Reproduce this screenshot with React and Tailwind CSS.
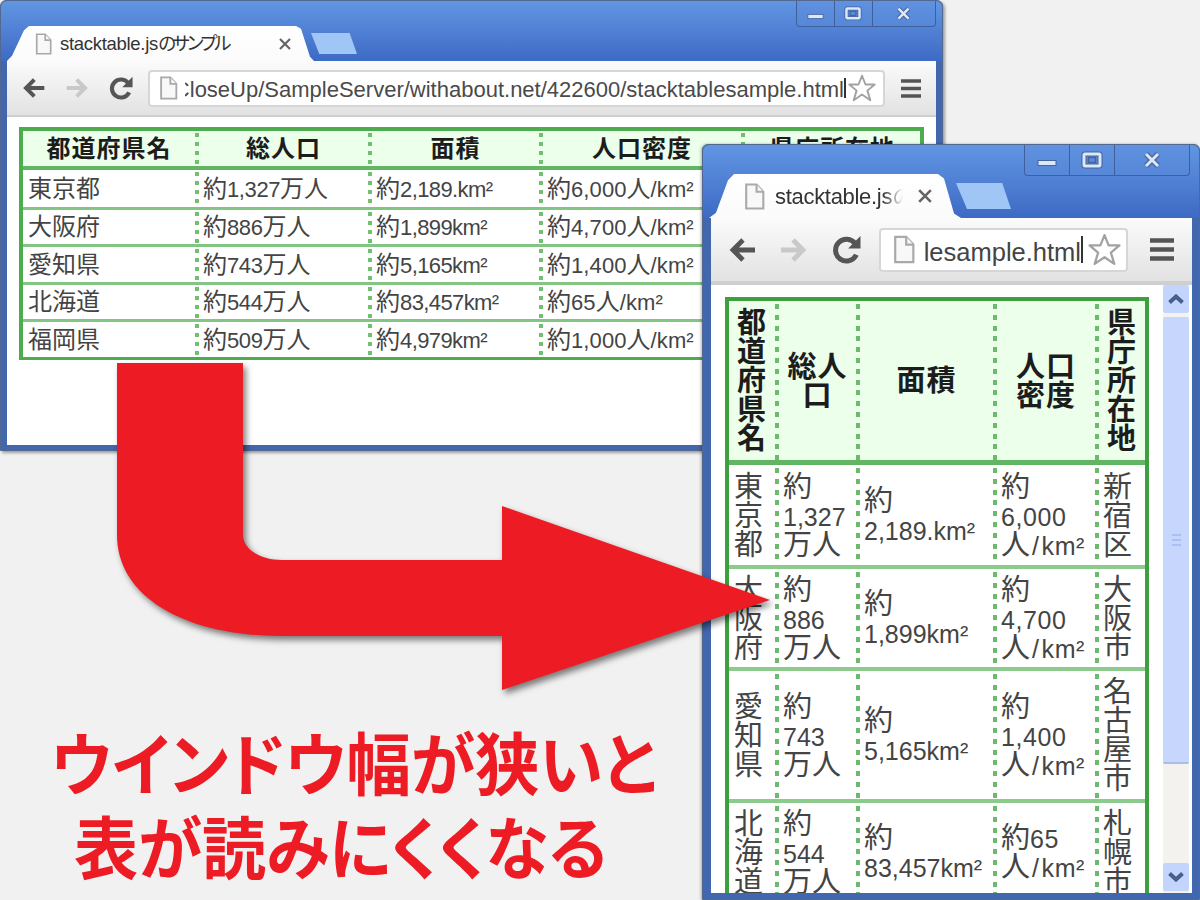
import clsx from 'clsx';

const prefectures = [
  ['東京都', '約1,327万人', '約2,189.km²', '約6,000人/km²', '新宿区'],
  ['大阪府', '約886万人', '約1,899km²', '約4,700人/km²', '大阪市'],
  ['愛知県', '約743万人', '約5,165km²', '約1,400人/km²', '名古屋市'],
  ['北海道', '約544万人', '約83,457km²', '約65人/km²', '札幌市'],
  ['福岡県', '約509万人', '約4,979km²', '約1,000人/km²', '福岡市'],
];

const wideHead = ['都道府県名', '総人口', '面積', '人口密度', '県庁所在地'];
const wideCols = ['w-[172px]', 'w-[173px]', 'w-[171px]', 'w-[202px]', 'w-[179px]'];
const wideHeights = ['h-[40px]', 'h-[37px]', 'h-[38px]', 'h-[37px]', 'h-[35px]'];
const wideLatin = ['', 'tracking-[-0.4px]', 'tracking-[-0.6px]', 'tracking-[0.1px]', ''];

// Cells as they wrap in the narrow window
const narrowHead = ['都\n道\n府\n県\n名', '総人\n口', '面積', '人口\n密度', '県\n庁\n所\n在\n地'];
const narrowCols = ['w-[46px]', 'w-[81px]', 'w-[137px]', 'w-[102px]', 'w-[50px]'];
const narrowRows = [
  { height: 'h-[104px]', cells: ['東\n京\n都', '約\n1,327\n万人', '約\n2,189.km²', '約\n6,000\n人/km²', '新\n宿\n区'] },
  { height: 'h-[102px]', cells: ['大\n阪\n府', '約\n886\n万人', '約\n1,899km²', '約\n4,700\n人/km²', '大\n阪\n市'] },
  { height: 'h-[132px]', cells: ['愛\n知\n県', '約\n743\n万人', '約\n5,165km²', '約\n1,400\n人/km²', '名\n古\n屋\n市'] },
  { height: 'h-[102px]', cells: ['北\n海\n道', '約\n544\n万人', '約\n83,457km²', '約65\n人/km²', '札\n幌\n市'] },
];
const narrowLatin = ['', '', '', 'tracking-[0.6px]', ''];

// Latin runs are set a little smaller than the kanji around them
function Mixed({ text, latin, slash }) {
  return text.split(/(\/|[0-9.,km²]+)/).map((part, i) =>
    i % 2 ? <span key={i} className={clsx(latin, part === '/' && slash)}>{part}</span> : part
  );
}

function Dots({ narrow }) {
  return (
    <div
      className={clsx(
        'w-1 shrink-0 self-stretch',
        narrow
          ? 'bg-[repeating-linear-gradient(to_bottom,transparent_0_3px,#6cba6c_3px_8px,transparent_8px_10.8px)]'
          : 'bg-[repeating-linear-gradient(to_bottom,transparent_0_2px,#70c070_2px_6px,transparent_6px_9px)]'
      )}
    />
  );
}

function Row({ cells, cols, className, head, narrow }) {
  const tracking = narrow ? narrowLatin : wideLatin;
  return (
    <div className={clsx('flex', className)}>
      {cells.map((text, i) => (
        <div key={i} className={clsx('flex shrink-0 items-center', cols[i])}>
          {i > 0 && <Dots narrow={narrow} />}
          <div
            className={clsx(
              'whitespace-pre',
              head ? 'flex-1 text-center font-bold tracking-[1px] text-[#1c1c1c]' : 'text-[#444]',
              !head && (i === 0 ? 'pl-[5px]' : 'pl-1'),
              narrow ? 'pt-[2px] text-[29px] leading-[29px]' : 'text-[24px] leading-8'
            )}
          >
            <Mixed
              text={text}
              latin={clsx(narrow ? 'text-[25px] leading-none' : 'text-[22px] leading-none', tracking[i])}
              slash={narrow && 'px-[2px]'}
            />
          </div>
        </div>
      ))}
    </div>
  );
}

function PageIcon({ className }) {
  return (
    <svg viewBox="0 0 20 26" className={className} fill="#f8f8f8" stroke="#a9a9a9" strokeWidth="2">
      <path d="M2 1.5h10l6.5 7v16H2z" />
      <path d="M12 1.5v7h6.5" />
    </svg>
  );
}

function BackArrow({ className }) {
  return (
    <svg viewBox="0 0 26 24" className={className} fill="none" stroke="currentColor" strokeWidth="4.8">
      <path d="M26 12H4M14 2 4 12l10 10" />
    </svg>
  );
}

function Reload({ className }) {
  return (
    <svg viewBox="0 0 28 28" className={className}>
      <path d="M22.5 8.5A10.5 10.5 0 1 0 23.5 19" fill="none" stroke="#555" strokeWidth="4.8" />
      <path d="M27.5 1v12h-12z" fill="#555" />
    </svg>
  );
}

function Star({ className }) {
  return (
    <svg viewBox="0 0 32 32" className={className} fill="#fff" stroke="#a2a2a2" strokeWidth="2.2">
      <path d="m16 2 4 10h10.500l-8.300 7L25.500 30 16 23.500 6.500 30l3.300-11L1.500 12H12z" strokeLinejoin="round" />
    </svg>
  );
}

function Menu({ className }) {
  return (
    <svg viewBox="0 0 24 24" className={className} stroke="#555" strokeWidth="4.4">
      <path d="M0 3h24M0 12h24M0 21h24" />
    </svg>
  );
}

function Close({ className }) {
  return (
    <svg viewBox="0 0 12 12" className={className} stroke="#666" strokeWidth="2.2">
      <path d="m1 1 10 10M11 1 1 11" />
    </svg>
  );
}

function Controls({ narrow }) {
  return (
    <div
      className={clsx(
        'flex rounded-b border border-t-0 border-[#40609c] bg-[#5d8ddb]/40',
        narrow ? 'mr-[2px] h-[31px] w-[166px]' : 'mr-[1px] h-[26px] w-[140px]'
      )}
    >
      <div className="flex w-[27.5%] items-center justify-center border-r border-[#40609c]">
        <svg viewBox="0 0 20 14" className={narrow ? 'w-5' : 'w-[17px]'}>
          <rect x="1" y="7.5" width="18" height="5" fill="#dce7f8" stroke="#47649d" />
        </svg>
      </div>
      <div className="flex w-[27.5%] items-center justify-center border-r border-[#40609c]">
        <svg viewBox="0 0 22 18" className={narrow ? 'w-[22px]' : 'w-[18px]'} fill="none">
          <rect x="3" y="3" width="16" height="12" rx="1" stroke="#47649d" strokeWidth="5" />
          <rect x="3" y="3" width="16" height="12" rx="1" stroke="#dce7f8" strokeWidth="3" />
          <rect x="7.5" y="6.5" width="7" height="5" stroke="#47649d" strokeWidth="1.5" />
        </svg>
      </div>
      <div className="flex flex-1 items-center justify-center">
        <svg viewBox="0 0 18 16" className={narrow ? 'w-[18px]' : 'w-[15px]'}>
          <path d="m3 2 12 12M15 2 3 14" stroke="#47649d" strokeWidth="5.5" />
          <path d="m3 2 12 12M15 2 3 14" stroke="#dce7f8" strokeWidth="3" />
        </svg>
      </div>
    </div>
  );
}

function WideWindow() {
  return (
    <div className="absolute left-0 top-0 flex h-[451px] w-[943px] flex-col rounded-t-md border border-[#53688f] bg-[#4167ae] shadow-[2px_2px_3px_rgba(0,0,0,0.35)]">
      <div className="flex h-[60px] shrink-0 items-start justify-between rounded-t-md bg-linear-to-b from-[#6196e2] via-[#5080d4] to-[#3d6ac4] pr-[5px]">
        <div className="flex h-full items-end pl-[6px]">
          <div className="flex h-[35px] w-[307px] items-center bg-linear-to-b from-white to-[#fbfbfb] pl-[28px] [clip-path:polygon(0_100%,5px_85%,17px_12%,22px_0,289px_0,294px_8%,303px_88%,100%_100%)]">
            <PageIcon className="h-[22px] w-[17px]" />
            <span className="ml-[8px] whitespace-nowrap text-[18.5px] tracking-[-0.3px] text-[#333]">
              stacktable.js<span className="tracking-[-4.5px]">のサンプル</span>
            </span>
            <Close className="ml-auto mr-[23px] size-[12px]" />
          </div>
          <div className="-ml-[3px] mb-[7px] h-[21px] w-[46px] bg-[#9fc6f4] [clip-path:polygon(0_0,84%_0,100%_100%,18%_100%)]" />
        </div>
        <Controls />
      </div>
      <div className="mx-[6px] flex h-[56px] shrink-0 items-center border-b-2 border-[#cfcfcf] bg-linear-to-b from-[#fbfbfb] to-[#e2e2e2] pl-[15px]">
        <BackArrow className="h-[20px] w-[23px] text-[#555]" />
        <BackArrow className="ml-[21px] h-[20px] w-[23px] rotate-180 text-[#c9c9c9]" />
        <Reload className="ml-[20px] size-[24px]" />
        <div className="ml-[15px] flex h-[37px] w-[737px] items-center rounded border-2 border-[#d6d6d6] bg-white pl-[9px]">
          <PageIcon className="h-[24px] w-[19px] shrink-0" />
          <div className="ml-[7px] flex w-[659px] justify-end overflow-hidden whitespace-nowrap pt-[3px] text-[22px] leading-7 text-[#4a4a4a]">
            <span>CloseUp/SampleServer/withabout.net/422600/stacktablesample.html</span>
          </div>
          <div className="h-[20px] w-[2px] shrink-0 bg-[#333]" />
          <Star className="ml-[2px] size-[28px] shrink-0" />
        </div>
        <Menu className="ml-[16px] h-[21px] w-[20px]" />
      </div>
      <div className="mx-[6px] mb-[5px] flex-1 overflow-hidden bg-white pl-[12px] pt-[10px]">
        <div className="w-[905px] border-4 border-b-3 border-[#4dac4d]">
          <Row cells={wideHead} cols={wideCols} head className="h-[39px] border-b-4 border-[#62b562] bg-[#ebffeb]" />
          {prefectures.map((cells, i) => (
            <Row
              key={i}
              cells={cells}
              cols={wideCols}
              className={clsx(wideHeights[i], i < 4 && 'border-b-3 border-[#83c683]')}
            />
          ))}
        </div>
      </div>
    </div>
  );
}

function ScrollButton({ down }) {
  return (
    <div className="flex h-[28px] shrink-0 items-center justify-center rounded-xs bg-[#c3d5fc]">
      <svg viewBox="0 0 16 10" className={clsx('w-4', down && 'rotate-180')} fill="none" stroke="#46608f" strokeWidth="4">
        <path d="m1.5 8.5 6.5-6 6.5 6" />
      </svg>
    </div>
  );
}

function NarrowWindow() {
  return (
    <div className="absolute left-[702px] top-[144px] flex h-[756px] w-[498px] flex-col rounded-t-md border border-[#53688f] bg-[#4167ae] shadow-[-1px_0_3px_rgba(0,0,0,0.3)]">
      <div className="flex h-[73px] shrink-0 items-start justify-between rounded-t-md bg-linear-to-b from-[#6196e2] via-[#5080d4] to-[#3d6ac4] pr-[7px]">
        <div className="flex h-full items-end pl-[6px]">
          <div className="flex h-[44px] w-[252px] items-center bg-linear-to-b from-white to-[#fbfbfb] pl-[35px] [clip-path:polygon(0_100%,7px_88%,19px_14%,25px_0,229px_0,235px_10%,245px_90%,100%_100%)]">
            <PageIcon className="h-[27px] w-[21px] shrink-0" />
            <div className="ml-[10px] w-[128px] overflow-hidden whitespace-nowrap text-[22px] tracking-[-0.3px] text-[#333] [mask-image:linear-gradient(to_right,#000_108px,transparent)]">
              stacktable.jsのサンプル
            </div>
            <Close className="ml-[15px] size-[14px] shrink-0" />
          </div>
          <div className="-ml-[5px] mb-[9px] h-[26px] w-[55px] bg-[#9fc6f4] [clip-path:polygon(0_0,84%_0,100%_100%,20%_100%)]" />
        </div>
        <Controls narrow />
      </div>
      <div className="ml-[8px] mr-[7px] flex h-[67px] shrink-0 items-center border-b-4 border-[#cfcfcf] bg-linear-to-b from-[#fbfbfb] to-[#e2e2e2] pl-[17px]">
        <BackArrow className="h-[24px] w-[28px] shrink-0 text-[#555]" />
        <BackArrow className="ml-[24px] h-[24px] w-[28px] shrink-0 rotate-180 text-[#c9c9c9]" />
        <Reload className="ml-[24px] size-[29px] shrink-0" />
        <div className="ml-[18px] flex h-[44px] w-[249px] shrink-0 items-center rounded border-2 border-[#d6d6d6] bg-white pl-[12px]">
          <PageIcon className="h-[29px] w-[22px] shrink-0" />
          <div className="ml-[9px] flex w-[157px] justify-end overflow-hidden whitespace-nowrap pt-[5px] text-[25.5px] leading-8 text-[#444]">
            <span>stacktablesample.html</span>
          </div>
          <div className="h-[27px] w-[2px] shrink-0 bg-[#333]" />
          <Star className="ml-[5px] size-[33px] shrink-0" />
        </div>
        <Menu className="ml-[22px] h-[25px] w-[24px] shrink-0" />
      </div>
      <div className="mb-[6px] ml-[8px] mr-[7px] flex min-h-0 flex-1 overflow-hidden bg-white">
        <div className="min-w-0 flex-1 pl-[14px] pt-[12px]">
          <div className="w-[424px] border-4 border-[#3d9f3d]">
            <Row cells={narrowHead} cols={narrowCols} head narrow className="h-[164px] border-b-5 border-[#62b562] bg-[#ebffeb]" />
            {narrowRows.map((row, i) => (
              <Row key={i} cells={row.cells} cols={narrowCols} narrow className={clsx(row.height, 'border-b-4 border-[#8ccb8c]')} />
            ))}
          </div>
        </div>
        <div className="mr-[3px] flex w-[26px] shrink-0 flex-col bg-[#f4f2ee] pb-[2px]">
          <ScrollButton />
          <div className="mt-[4px] flex h-[447px] shrink-0 flex-col items-center justify-center gap-[3px] rounded-xs border-b-2 border-[#a9bfe9] bg-[#c6d6fd]">
            <div className="h-[2px] w-[9px] bg-[#a9c0f3]" />
            <div className="h-[2px] w-[9px] bg-[#a9c0f3]" />
            <div className="h-[2px] w-[9px] bg-[#a9c0f3]" />
          </div>
          <div className="mt-auto">
            <ScrollButton down />
          </div>
        </div>
      </div>
    </div>
  );
}

export default function App() {
  return (
    <div className="relative h-[900px] w-[1200px] overflow-hidden bg-[#f1f1f1] font-['Liberation_Sans','Noto_Sans_CJK_JP',sans-serif]">
      <WideWindow />
      <NarrowWindow />
      {/* Bent arrow from the wide window to the narrow one */}
      <svg viewBox="0 0 680 350" className="absolute left-[110px] top-[355px] h-[350px] w-[680px] drop-shadow-[3px_4px_3px_rgba(0,0,0,0.5)]">
        <path
          d="M7 8H133V180C133 194 150 205 172 205H392V151L660 245 392 335V281H172C75 281 7 242 7 180z"
          fill="#ed1c24"
        />
      </svg>
      <div className="absolute left-0 top-[724px] w-[702px] text-[68px] font-bold leading-[84px] whitespace-nowrap text-[#ed1c24] [font-feature-settings:'palt']">
        <div className="ml-[51px] origin-left scale-x-[0.947]">ウインドウ幅が狭いと</div>
        <div className="ml-[74px] origin-left scale-x-[0.943]">表が読みにくくなる</div>
      </div>
    </div>
  );
}
